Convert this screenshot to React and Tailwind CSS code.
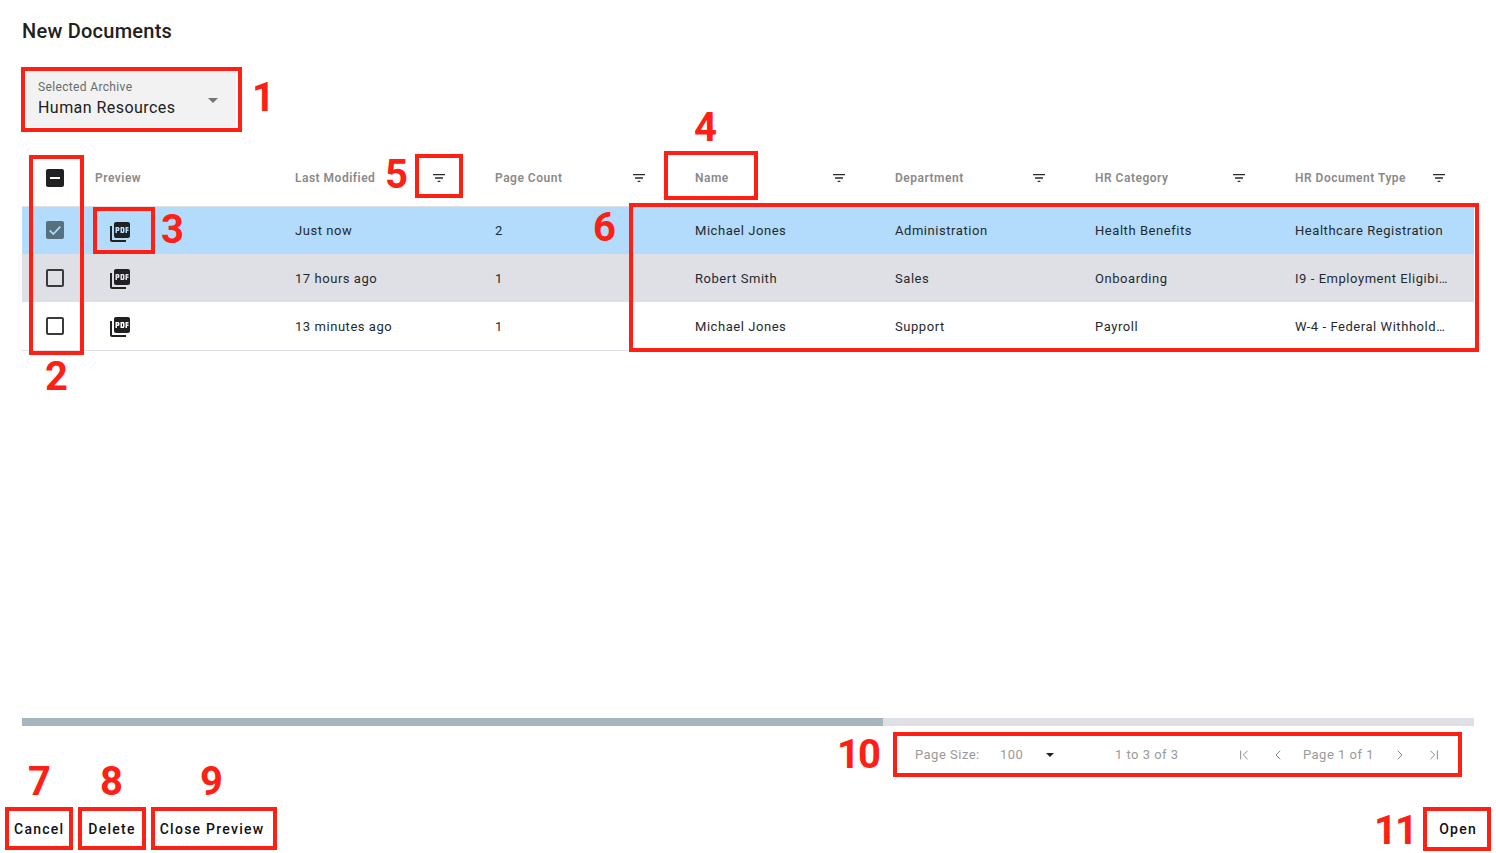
import React from 'react';
import { ChevronFirst, ChevronLast, ChevronLeft, ChevronRight } from 'lucide-react';

const columns = ['Last Modified', 'Page Count', 'Name', 'Department', 'HR Category', 'HR Document Type'];

const rows = [
  { selected: true, bg: 'bg-[#b3dbfb] h-[47px]', cells: ['Just now', '2', 'Michael Jones', 'Administration', 'Health Benefits', 'Healthcare Registration'] },
  { selected: false, bg: 'bg-[#dfe0e5] h-[48px]', cells: ['17 hours ago', '1', 'Robert Smith', 'Sales', 'Onboarding', 'I9 - Employment Eligibility'] },
  { selected: false, bg: 'bg-white h-[49px] border-b border-[#dfe0e5]', cells: ['13 minutes ago', '1', 'Michael Jones', 'Support', 'Payroll', 'W-4 - Federal Withholding'] },
];

const boxes = [
  'left-[21px] top-[67px] w-[221px] h-[65px]',
  'left-[29px] top-[155px] w-[55px] h-[200px]',
  'left-[93px] top-[207px] w-[62px] h-[47px]',
  'left-[664px] top-[151px] w-[94px] h-[49px]',
  'left-[415px] top-[154px] w-[48px] h-[44px]',
  'left-[629px] top-[203px] w-[850px] h-[149px]',
  'left-[5px] top-[807px] w-[68px] h-[43px]',
  'left-[78px] top-[807px] w-[68px] h-[43px]',
  'left-[151px] top-[807px] w-[126px] h-[43px]',
  'left-[893px] top-[732px] w-[569px] h-[45px]',
  'left-[1423px] top-[807px] w-[68px] h-[44px]',
];

const numbers = [
  { text: '1', pos: 'left-[252px] top-[75px]' },
  { text: '2', pos: 'left-[45px] top-[354px]' },
  { text: '3', pos: 'left-[161px] top-[207px]' },
  { text: '4', pos: 'left-[694px] top-[105px]' },
  { text: '5', pos: 'left-[385px] top-[152px]' },
  { text: '6', pos: 'left-[593px] top-[205px]' },
  { text: '7', pos: 'left-[28px] top-[759px]' },
  { text: '8', pos: 'left-[100px] top-[759px]' },
  { text: '9', pos: 'left-[200px] top-[759px]' },
  { text: '10', pos: 'left-[837px] top-[732px]' },
  { text: '11', pos: 'left-[1374px] top-[808px]' },
];

const FilterIcon = () => (
  <svg width="16" height="16" viewBox="0 0 24 24" fill="#2b2b2b">
    <path d="M10 18h4v-2h-4v2zM3 6v2h18V6H3zm3 7h12v-2H6v2z" />
  </svg>
);

const PdfIcon = () => (
  <svg width="24" height="24" viewBox="0 0 24 24" fill="#212121">
    <path d="M20 2H8c-1.1 0-2 .9-2 2v12c0 1.1.9 2 2 2h12c1.1 0 2-.9 2-2V4c0-1.1-.9-2-2-2zm-8.5 7.5c0 .83-.67 1.5-1.5 1.5H9v2H7.5V7H10c.83 0 1.5.67 1.5 1.5v1zm5 2c0 .83-.67 1.5-1.5 1.5h-2.5V7H15c.83 0 1.5.67 1.5 1.5v3zm4-3H19v1h1.5V11H19v2h-1.5V7h3v1.5zM9 9.5h1v-1H9v1zM4 6H2v14c0 1.1.9 2 2 2h14v-2H4V6zm10 5.5h1v-3h-1v3z" />
  </svg>
);

const Checkbox = ({ checked }) =>
  checked ? (
    <div className="w-[18px] h-[18px] rounded-[2px] bg-[#55707f] flex items-center justify-center -translate-y-px">
      <svg width="16" height="16" viewBox="0 0 24 24" fill="none" stroke="#b3dbfb" strokeWidth="2.5">
        <path d="M4 12.5l5.5 5.5L20 7" />
      </svg>
    </div>
  ) : (
    <div className="w-[18px] h-[18px] rounded-[2px] border-2 border-[#3a3a3a]" />
  );

export default function App() {
  return (
    <div className="relative h-[853px] bg-white flex flex-col font-['Roboto',sans-serif] overflow-hidden">
      <div className="flex-1 flex flex-col px-[22px]">
        <h1 className="mt-[19px] h-[24px] leading-[24px] text-[20px] font-medium tracking-[0.25px] text-[#212121]">New Documents</h1>

        <div className="mt-[28px] ml-[4px] w-[210px] h-[56px] bg-[#f2f2f2] pl-[12px] pr-[16px] relative">
          <div className="pt-[9px] text-[12px] leading-[14px] tracking-[0.35px] text-[#6b6b6b]">Selected Archive</div>
          <div className="mt-[4px] text-[16px] leading-[20px] tracking-[0.45px] text-[#212121]">Human Resources</div>
          <div className="absolute right-[18px] top-[27px] w-0 h-0 border-x-[5.5px] border-x-transparent border-t-[5.5px] border-t-[#757575]" />
        </div>

        <div className="mt-[27px] w-[1452px] overflow-hidden">
          <div className="h-[53px] pb-[4px] flex items-center border-b border-[#dfe0e5]">
            <div className="w-[57px] shrink-0 pl-[24px]">
              <div className="w-[18px] h-[18px] rounded-[2px] bg-[#212121] flex items-center justify-center">
                <div className="w-[10px] h-[2px] bg-white" />
              </div>
            </div>
            <div className="w-[200px] shrink-0 pl-[16px] text-[12px] font-semibold tracking-[0.5px] text-[#8a8a8a]">Preview</div>
            {columns.map((col) => (
              <div key={col} className="w-[200px] shrink-0 pl-[16px] pr-[32px] flex items-center justify-between text-[12px] font-semibold tracking-[0.5px] text-[#8a8a8a]">
                <span>{col}</span>
                <FilterIcon />
              </div>
            ))}
          </div>

          {rows.map((row, i) => (
            <div key={i} className={`flex items-center ${row.bg}`}>
              <div className="w-[57px] shrink-0 pl-[24px]">
                <Checkbox checked={row.selected} />
              </div>
              <div className="w-[200px] shrink-0 pl-[29px] pt-[2px]">
                <PdfIcon />
              </div>
              {row.cells.map((cell, j) => (
                <div key={j} className="w-[200px] shrink-0 pl-[16px] pt-[1px] text-[13px] tracking-[0.55px] text-[#1f2a30]">
                  <div className={j === 5 ? 'max-w-[153px] truncate' : ''}>{cell}</div>
                </div>
              ))}
            </div>
          ))}
        </div>

        <div className="flex-1" />

        <div className="h-[8px] bg-[#dfe0e5]">
          <div className="h-full w-[861px] bg-[#a5b6bd]" />
        </div>

        <div className="h-[56px] pt-[1px] flex items-center justify-end text-[13px] tracking-[0.5px] text-[#9a9a9a]">
          <span className="w-[85px]">Page Size:</span>
          <span className="w-[46px]">100</span>
          <div className="w-0 h-0 border-x-[4px] border-x-transparent border-t-[4px] border-t-[#212121]" />
          <span className="ml-[61px] w-[121px]">1 to 3 of 3</span>
          <ChevronFirst size={16} strokeWidth={1.5} className="text-[#8a8a8a]" />
          <ChevronLeft size={16} strokeWidth={1.5} className="ml-[18px] text-[#8a8a8a]" />
          <span className="ml-[17px]">Page 1 of 1</span>
          <ChevronRight size={16} strokeWidth={1.5} className="ml-[18px] text-[#8a8a8a]" />
          <ChevronLast size={16} strokeWidth={1.5} className="ml-[18px] mr-[32px] text-[#8a8a8a]" />
        </div>
      </div>

      <div className="h-[71px] pb-[6px] px-[6px] flex items-end text-[14px] font-medium tracking-[1.25px] text-[#111]">
        <button className="px-[8px] h-[36px]">Cancel</button>
        <button className="ml-[8px] px-[8px] h-[36px]">Delete</button>
        <button className="ml-[8px] px-[8px] h-[36px]">Close Preview</button>
        <button className="ml-auto px-[8px] h-[36px] mr-[5px]">Open</button>
      </div>

      {boxes.map((pos) => (
        <div key={pos} className={`absolute border-4 border-[#ff2015] pointer-events-none ${pos}`} />
      ))}
      {numbers.map((n) => (
        <div key={n.text} className={`absolute text-[40px] leading-[46px] font-bold tracking-[-2px] text-[#ff2015] ${n.pos}`}>{n.text}</div>
      ))}
    </div>
  );
}
